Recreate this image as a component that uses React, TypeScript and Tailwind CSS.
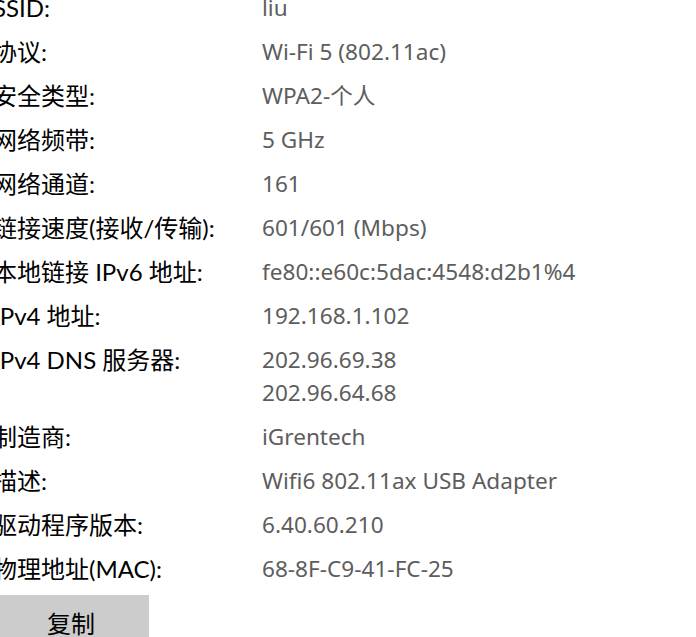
const rows: { label: string; value: string[] }[] = [
  { label: 'SSID:', value: ['liu'] },
  { label: '协议:', value: ['Wi-Fi 5 (802.11ac)'] },
  { label: '安全类型:', value: ['WPA2-个人'] },
  { label: '网络频带:', value: ['5 GHz'] },
  { label: '网络通道:', value: ['161'] },
  { label: '链接速度(接收/传输):', value: ['601/601 (Mbps)'] },
  { label: '本地链接 IPv6 地址:', value: ['fe80::e60c:5dac:4548:d2b1%4'] },
  { label: 'IPv4 地址:', value: ['192.168.1.102'] },
  { label: 'IPv4 DNS 服务器:', value: ['202.96.69.38', '202.96.64.68'] },
  { label: '制造商:', value: ['iGrentech'] },
  { label: '描述:', value: ['Wifi6 802.11ax USB Adapter'] },
  { label: '驱动程序版本:', value: ['6.40.60.210'] },
  { label: '物理地址(MAC):', value: ['68-8F-C9-41-FC-25'] },
];

export default function App() {
  return (
    <div
      className="w-[696px] h-[637px] overflow-hidden bg-white text-[24px] leading-[33px]"
      style={{ fontFamily: 'Lato, "Noto Sans CJK SC", sans-serif' }}
    >
      {/* list is scrolled a little, so the first row and left edge are clipped */}
      <div className="-mt-[9px] -ml-[7px] flex flex-col gap-[11px]">
        {rows.map((r) => (
          <div key={r.label} className="flex">
            <div className="w-[269px] shrink-0 text-black">{r.label}</div>
            <div
              className="flex flex-col text-[#5d5d5d] text-[22.6px]"
              style={{ fontFamily: '"Noto Sans", "Noto Sans CJK SC", sans-serif' }}
            >
              {r.value.map((v) => (
                <span key={v}>{v}</span>
              ))}
            </div>
          </div>
        ))}
        <button className="-mt-[1px] w-[156px] h-[60px] bg-[#cccccc] text-black text-[24px] pb-[4px]">
          复制
        </button>
      </div>
    </div>
  );
}
